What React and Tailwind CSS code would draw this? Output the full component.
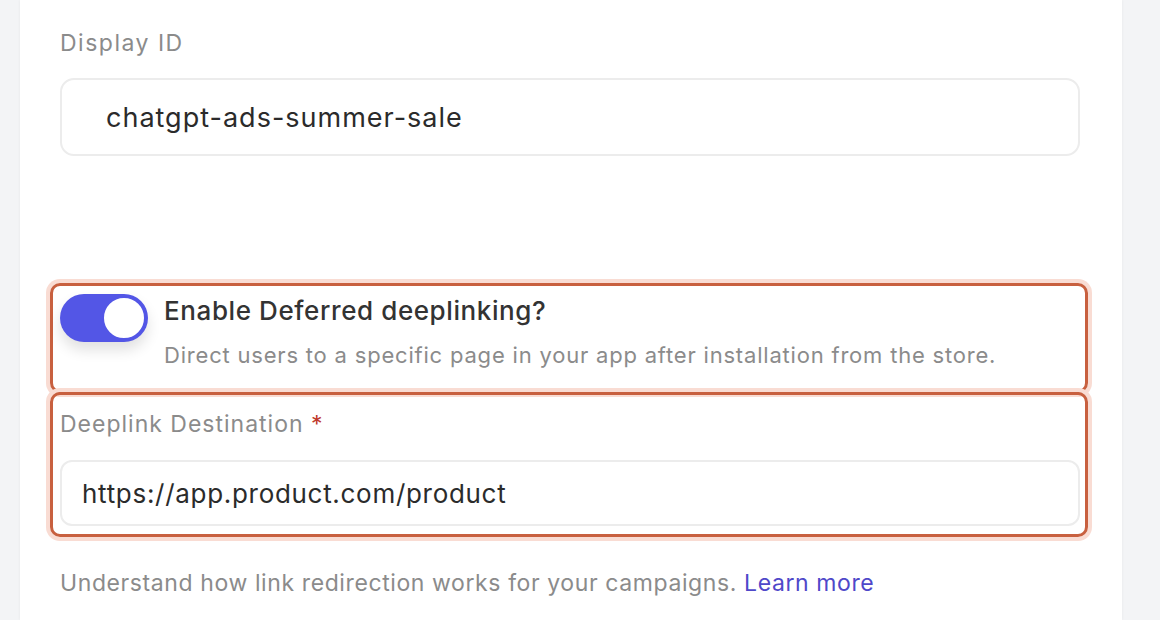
import React, { useState } from "react";

function Toggle({ on, onChange }) {
  return (
    <button
      type="button"
      onClick={() => onChange(!on)}
      className={`relative shrink-0 w-[88px] h-[48px] rounded-full shadow-[0_8px_14px_rgba(0,0,0,0.12)] ${
        on ? "bg-[#5356e6]" : "bg-gray-300"
      }`}
    >
      <span
        className={`absolute top-[2px] w-[44px] h-[44px] rounded-full bg-white border-2 border-[#5356e6] ${
          on ? "left-[42px]" : "left-[2px]"
        }`}
      />
    </button>
  );
}

export default function App() {
  const [deferred, setDeferred] = useState(true);
  const [displayId, setDisplayId] = useState("chatgpt-ads-summer-sale");
  const [destination, setDestination] = useState("https://app.product.com/product");

  return (
    <div
      className="w-full h-[620px] overflow-hidden bg-[#f3f4f6] flex"
      style={{ fontFamily: "Inter, 'Noto Sans', sans-serif" }}
    >
      <div className="ml-[20px] w-[1102px] h-full bg-white shadow-[0_0_3px_rgba(0,0,0,0.06)] pl-[40px] pr-[42px] pt-[28px]">
        {/* display id */}
        <div>
          <label className="block text-[23px] leading-[30px] tracking-[1.5px] text-[#8b8b8b]">Display ID</label>
          <input
            value={displayId}
            onChange={(e) => setDisplayId(e.target.value)}
            className="mt-[20px] w-full h-[78px] rounded-[14px] border-2 border-[#ececec] pl-[44px] text-[27px] tracking-[1px] text-[#2b2b2b] outline-none"
          />
        </div>

        {/* deferred deeplink */}
        <div className="mt-[127px] -ml-[10px] -mr-[8px]">
          <div className="h-[110px] border-[3px] border-[#c8603f] rounded-[10px] shadow-[0_0_0_4px_#f9dcd3] pl-[7px] pr-[5px] pt-[8px] flex gap-[16px]">
            <Toggle on={deferred} onChange={setDeferred} />
            <div className="pt-[1px]">
              <div className="text-[26px] leading-[32px] font-medium tracking-[0.6px] text-[#333333]">
                Enable Deferred deeplinking?
              </div>
              <div className="mt-[13px] text-[22px] leading-[30px] tracking-[0.8px] text-[#8b8b8b]">
                Direct users to a specific page in your app after installation from the store.
              </div>
            </div>
          </div>

          {deferred && (
            <div className="-mt-[1px] h-[145px] border-[3px] border-[#c8603f] rounded-[10px] shadow-[0_0_0_4px_#f9dcd3] pl-[7px] pr-[5px] pt-[14px]">
              <label className="block text-[23px] leading-[30px] tracking-[1px] text-[#8b8b8b]">
                Deeplink Destination <span className="text-[#c0392b]">*</span>
              </label>
              <input
                value={destination}
                onChange={(e) => setDestination(e.target.value)}
                className="mt-[21px] w-full h-[66px] rounded-[12px] border-2 border-[#ececec] pl-[20px] text-[26px] tracking-[0.7px] text-[#2b2b2b] outline-none"
              />
            </div>
          )}
        </div>

        <p className="mt-[31px] text-[23px] leading-[30px] tracking-[0.6px] text-[#8b8b8b]">
          Understand how link redirection works for your campaigns.{" "}
          <a href="#" className="text-[#4f48c9]">Learn more</a>
        </p>
      </div>
    </div>
  );
}
